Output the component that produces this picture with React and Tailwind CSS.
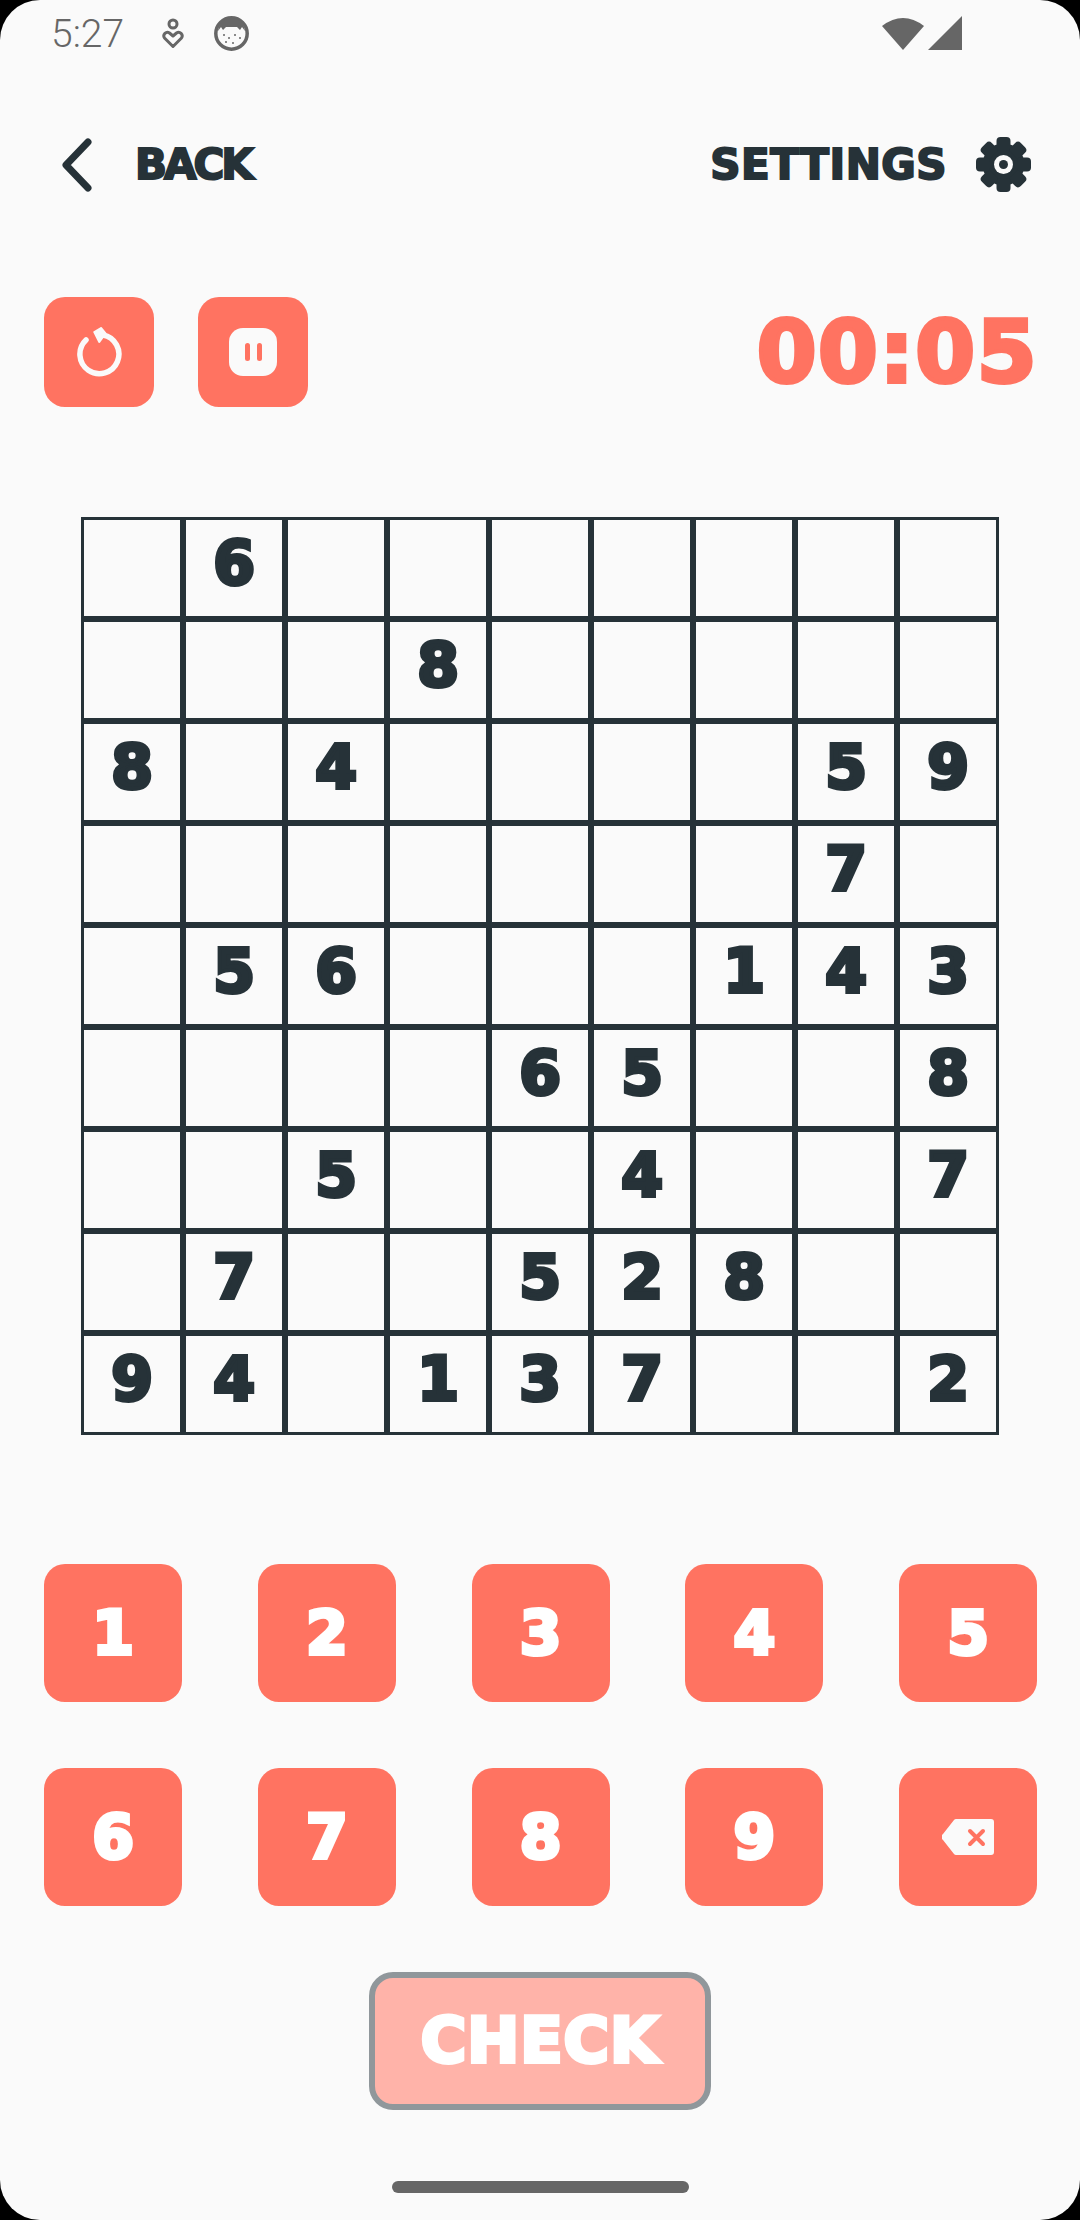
import React from 'react';

const board = [
  ['', '6', '', '', '', '', '', '', ''],
  ['', '', '', '8', '', '', '', '', ''],
  ['8', '', '4', '', '', '', '', '5', '9'],
  ['', '', '', '', '', '', '', '7', ''],
  ['', '5', '6', '', '', '', '1', '4', '3'],
  ['', '', '', '', '6', '5', '', '', '8'],
  ['', '', '5', '', '', '4', '', '', '7'],
  ['', '7', '', '', '5', '2', '8', '', ''],
  ['9', '4', '', '1', '3', '7', '', '', '2'],
];

const keys = [
  ['1', '2', '3', '4', '5'],
  ['6', '7', '8', '9', 'del'],
];

const display = "font-['DejaVu_Sans',sans-serif] font-bold";

const StatusBar = () => (
  <div className="flex h-[66px] items-center justify-between pl-[51px] pr-[118px]">
    <div className="flex items-center">
      <span className="pt-[3px] font-['Roboto',sans-serif] text-[39px] font-light leading-none text-[#666666]">5:27</span>
      <svg className="ml-[38px]" width="22" height="31" viewBox="0 0 22 31" fill="none" stroke="#666666" strokeWidth="3">
        <circle cx="11" cy="6" r="4" />
        <path d="M11 28.500 2.500 20a3.600 3.600 0 0 1 5-5l3.500 3 3.500-3a3.600 3.600 0 0 1 5 5Z" strokeLinejoin="round" />
      </svg>
      <svg className="ml-[30px]" width="35" height="35" viewBox="0 0 35 35">
        <circle cx="17.500" cy="17.500" r="15.700" fill="#fafafa" stroke="#666666" strokeWidth="3.500" />
        <path d="M4 15C5 6 11 2 17.500 2S30 6 31 15l-3-4-2 3-3-3H12l-3 3-2-3Z" fill="#666666" />
        <g fill="#666666">
          <circle cx="10" cy="19" r="1" /><circle cx="15" cy="22" r="1" /><circle cx="21" cy="19" r="1" />
          <circle cx="26" cy="22" r="1" /><circle cx="12" cy="26" r="1" /><circle cx="19" cy="27" r="1" />
        </g>
      </svg>
    </div>
    <div className="flex items-center gap-[4px]">
      <svg width="42" height="34" viewBox="0 0 42 34">
        <path d="M0 10Q21-6 42 10L21 34Z" fill="#666666" />
      </svg>
      <svg width="34" height="34" viewBox="0 0 34 34">
        <path d="M34 0V34H0Z" fill="#666666" />
      </svg>
    </div>
  </div>
);

const Gear = () => (
  <svg className="ml-[29px]" width="55" height="55" viewBox="0 0 55 55">
    <circle cx="27.500" cy="27.500" r="21" fill="#263238" />
    {[0, 45, 90, 135, 180, 225, 270, 315].map((deg) => (
      <rect key={deg} x="20.500" y="0" width="14" height="14" rx="4" fill="#263238" transform={`rotate(${deg} 27.500 27.500)`} />
    ))}
    <circle cx="27.500" cy="27.500" r="9.500" fill="#fafafa" />
    <circle cx="27.500" cy="27.500" r="4.500" fill="#263238" />
  </svg>
);

const TopNav = () => (
  <div className="mt-[71px] flex h-[55px] items-center justify-between pl-[62px] pr-[49px]">
    <div className="flex items-center">
      <svg width="30" height="54" viewBox="0 0 30 54" fill="none" stroke="#263238" strokeWidth="7" strokeLinecap="round" strokeLinejoin="round">
        <path d="M26 4 4 27l22 23" />
      </svg>
      <span className={`${display} ml-[43px] text-[42px] leading-none tracking-[-3px] text-[#263238] [-webkit-text-stroke:2px_#263238]`}>BACK</span>
    </div>
    <div className="flex items-center">
      <span className={`${display} text-[42px] leading-none tracking-[0.5px] text-[#263238] [-webkit-text-stroke:2px_#263238]`}>SETTINGS</span>
      <Gear />
    </div>
  </div>
);

const Controls = () => (
  <div className="mt-[105px] flex h-[110px] items-center justify-between pl-[44px] pr-[42px]">
    <div className="flex gap-[44px]">
      <button className="flex h-[110px] w-[110px] items-center justify-center rounded-[21px] bg-[#ff7361]">
        <svg width="46" height="50" viewBox="0 0 46 50" fill="none" stroke="#fafafa" strokeLinecap="round" strokeLinejoin="round">
          <path d="M27 8A19.500 19.500 0 1 1 10 13" strokeWidth="5.500" />
          <path d="M18.300 5 25 1l4.500 5.300L23.300 15Z" fill="#fafafa" strokeWidth="2" />
        </svg>
      </button>
      <button className="flex h-[110px] w-[110px] items-center justify-center rounded-[21px] bg-[#ff7361]">
        <div className="flex h-[48px] w-[48px] items-center justify-center gap-[7px] rounded-[14px] bg-[#fafafa]">
          <span className="h-[18px] w-[5px] rounded-full bg-[#ff7361]" />
          <span className="h-[18px] w-[5px] rounded-full bg-[#ff7361]" />
        </div>
      </button>
    </div>
    <span className={`${display} text-[86px] leading-none tracking-[1.500px] text-[#ff7361] [-webkit-text-stroke:4px_#ff7361]`}>00:05</span>
  </div>
);

const Board = () => (
  <div className="ml-[81px] mt-[110px] grid w-[918px] grid-cols-9">
    {board.flat().map((value, i) => (
      <div key={i} className={`${display} flex h-[102px] items-center justify-center border-[3px] border-[#263238] pb-[10px] text-[60px] leading-none text-[#263238] [-webkit-text-stroke:4px_#263238]`}>
        {value}
      </div>
    ))}
  </div>
);

const Keypad = () => (
  <div className="mt-[129px] flex flex-col gap-[66px] pl-[44px] pr-[43px]">
    {keys.map((row, r) => (
      <div key={r} className="flex justify-between">
        {row.map((key) => (
          <button key={key} className={`${display} flex h-[138px] w-[138px] items-center justify-center rounded-[21px] bg-[#ff7361] text-[60px] leading-none text-white [-webkit-text-stroke:4px_#ffffff]`}>
            {key === 'del' ? (
              <svg width="52" height="36" viewBox="0 0 52 36">
                <path fill="#fafafa" d="M14 0h35a3 3 0 0 1 3 3v30a3 3 0 0 1-3 3H14a3 3 0 0 1-2-1L1 21a4 4 0 0 1 0-6L12 1a3 3 0 0 1 2-1Z" />
                <path d="m28 12 13 13m0-13L28 25" stroke="#ff7361" strokeWidth="4" strokeLinecap="round" />
              </svg>
            ) : key}
          </button>
        ))}
      </div>
    ))}
  </div>
);

export default function App() {
  return (
    <div className="h-[2220px] w-[1080px] overflow-hidden bg-black">
      <div className="flex h-full flex-col rounded-[40px] bg-[#fafafa]">
        <StatusBar />
        <TopNav />
        <Controls />
        <Board />
        <Keypad />
        <div className="mt-[66px] flex justify-center">
          <button className={`${display} flex h-[138px] w-[342px] items-center justify-center rounded-[24px] border-[6px] border-[#90979b] bg-[#ffb3a9] text-[62px] leading-none tracking-[1px] text-white [-webkit-text-stroke:4px_#ffffff]`}>
            CHECK
          </button>
        </div>
        <div className="mx-auto mt-[71px] h-[12px] w-[297px] rounded-full bg-[#666666]" />
      </div>
    </div>
  );
}
